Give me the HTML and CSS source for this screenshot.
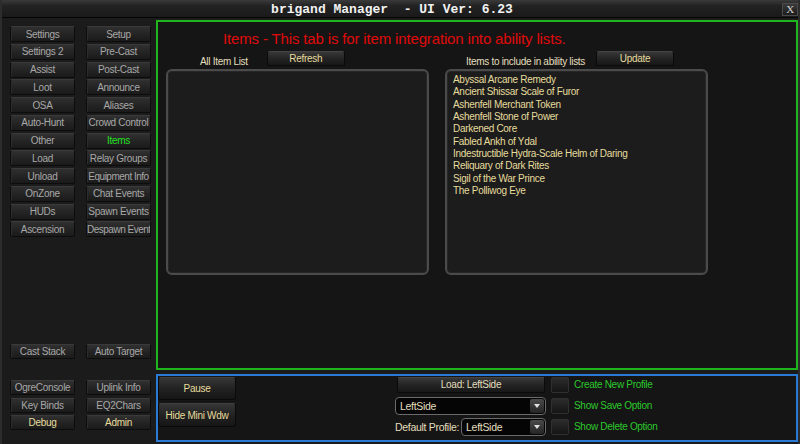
FILE: index.html
```html
<!DOCTYPE html>
<html lang="en">
<head>
    <meta charset="UTF-8">
    <title>brigand Manager</title>
    <link rel="stylesheet" href="styles.css">
</head>
<body>
    <div class="window">
        <div class="titlebar">
            <span class="title">brigand Manager&nbsp;&nbsp;- UI Ver: 6.23</span>
            <button class="close-btn">X</button>
        </div>

        <div class="frame">
            <aside class="sidebar">
                <div class="nav-grid">
                    <button class="nav-btn">Settings</button>
                    <button class="nav-btn">Setup</button>
                    <button class="nav-btn">Settings 2</button>
                    <button class="nav-btn">Pre-Cast</button>
                    <button class="nav-btn">Assist</button>
                    <button class="nav-btn">Post-Cast</button>
                    <button class="nav-btn">Loot</button>
                    <button class="nav-btn">Announce</button>
                    <button class="nav-btn">OSA</button>
                    <button class="nav-btn">Aliases</button>
                    <button class="nav-btn">Auto-Hunt</button>
                    <button class="nav-btn">Crowd Control</button>
                    <button class="nav-btn">Other</button>
                    <button class="nav-btn active">Items</button>
                    <button class="nav-btn">Load</button>
                    <button class="nav-btn">Relay Groups</button>
                    <button class="nav-btn">Unload</button>
                    <button class="nav-btn tight">Equipment Info</button>
                    <button class="nav-btn">OnZone</button>
                    <button class="nav-btn">Chat Events</button>
                    <button class="nav-btn">HUDs</button>
                    <button class="nav-btn">Spawn Events</button>
                    <button class="nav-btn">Ascension</button>
                    <button class="nav-btn tight">Despawn Event</button>
                </div>

                <div class="nav-grid nav-grid--mid">
                    <button class="nav-btn small">Cast Stack</button>
                    <button class="nav-btn small">Auto Target</button>
                </div>

                <div class="nav-grid nav-grid--bottom">
                    <button class="nav-btn small">OgreConsole</button>
                    <button class="nav-btn small">Uplink Info</button>
                    <button class="nav-btn small">Key Binds</button>
                    <button class="nav-btn small">EQ2Chars</button>
                    <button class="nav-btn small gold">Debug</button>
                    <button class="nav-btn small gold">Admin</button>
                </div>
            </aside>

            <main class="content">
                <section class="tab-panel">
                    <h1 class="tab-heading">Items - This tab is for item integration into ability lists.</h1>

                    <div class="lists">
                        <div class="list-col list-col--all">
                            <div class="list-header">
                                <span class="list-label">All Item List</span>
                                <button class="tab-btn">Refresh</button>
                            </div>
                            <div class="list-box"></div>
                        </div>

                        <div class="list-col list-col--include">
                            <div class="list-header">
                                <span class="list-label">Items to include in ability lists</span>
                                <button class="tab-btn">Update</button>
                            </div>
                            <ul class="list-box">
                                <li>Abyssal Arcane Remedy</li>
                                <li>Ancient Shissar Scale of Furor</li>
                                <li>Ashenfell Merchant Token</li>
                                <li>Ashenfell Stone of Power</li>
                                <li>Darkened Core</li>
                                <li>Fabled Ankh of Ydal</li>
                                <li>Indestructible Hydra-Scale Helm of Daring</li>
                                <li>Reliquary of Dark Rites</li>
                                <li>Sigil of the War Prince</li>
                                <li>The Polliwog Eye</li>
                            </ul>
                        </div>
                    </div>
                </section>

                <section class="profile-panel">
                    <div class="mini-actions">
                        <button class="big-btn">Pause</button>
                        <button class="big-btn">Hide Mini Wdw</button>
                    </div>

                    <div class="profile-grid">
                        <button class="load-btn">Load: LeftSide</button>
                        <span class="check"></span>
                        <span class="check-label">Create New Profile</span>

                        <div class="select">
                            <span class="select-value">LeftSide</span>
                            <span class="select-arrow"></span>
                        </div>
                        <span class="check"></span>
                        <span class="check-label">Show Save Option</span>

                        <div class="default-row">
                            <span class="default-label">Default Profile:</span>
                            <div class="select select--small">
                                <span class="select-value">LeftSide</span>
                                <span class="select-arrow"></span>
                            </div>
                        </div>
                        <span class="check"></span>
                        <span class="check-label">Show Delete Option</span>
                    </div>
                </section>
            </main>
        </div>
    </div>
</body>
</html>
```

FILE: styles.css
```css
/* palette */
:root {
    --frame-bg: #1b1b1b;
    --panel-bg: #151515;
    --btn-text: #a8a8a8;
    --gold-text: #e6dc9c;
    --pale-text: #e3dfbd;
    --green: #1fb51f;
    --green-text: #2cc92c;
    --blue: #2a7ad6;
}

* {
    box-sizing: border-box;
}

body {
    margin: 0;
    background: #0c0c0c;
    font-family: 'Liberation Sans', Arial, sans-serif;
    font-size: 10px;
    letter-spacing: -0.3px;
}

button {
    font-family: inherit;
    font-size: 10px;
    letter-spacing: -0.3px;
    padding: 0;
    cursor: pointer;
}

.window {
    width: 800px;
    height: 444px;
    display: flex;
    flex-direction: column;
    background: var(--frame-bg);
    border-left: 2px solid #2c2c2c;
    border-right: 2px solid #2c2c2c;
}

/* title bar */
.titlebar {
    height: 18px;
    display: flex;
    align-items: center;
    background: linear-gradient(#3a3a3a, #222 35%, #1a1a1a);
    border-bottom: 1px solid #050505;
}

.title {
    flex: 1;
    text-align: center;
    padding-top: 2px;
    font-family: 'Liberation Mono', 'Courier New', monospace;
    font-weight: bold;
    font-size: 13px;
    letter-spacing: 0;
    color: #f2f2f2;
    white-space: pre;
}

.close-btn {
    width: 16px;
    height: 13px;
    margin-top: 2px;
    background: linear-gradient(#3a3a3a, #1c1c1c);
    border: 1px solid #4a4a4a;
    color: #d0d0d0;
    font-family: 'Liberation Serif', serif;
    font-size: 11px;
    line-height: 11px;
}

.frame {
    flex: 1;
    display: flex;
    min-height: 0;
}

/* left nav */
.sidebar {
    width: 154px;
    padding: 8px 0 0 8px;
    display: flex;
    flex-direction: column;
}

.nav-grid {
    display: grid;
    grid-template-columns: 65px 65px;
    column-gap: 11px;
    row-gap: 1.75px;
}

.nav-grid--mid {
    margin-top: 107px;
}

.nav-grid--bottom {
    margin-top: 21px;
    row-gap: 2.5px;
}

.nav-btn {
    height: 16px;
    background: linear-gradient(#303030, #242424 50%, #1a1a1a);
    border: 1px solid #0c0c0c;
    border-top-color: #3a3a3a;
    border-radius: 2px;
    box-shadow: inset 1px 0 0 #2c2c2c;
    color: var(--btn-text);
    white-space: nowrap;
    overflow: hidden;
}

.nav-btn.tight {
    letter-spacing: -0.5px;
}

.nav-btn.small {
    height: 15px;
}

.nav-btn.active {
    color: #22e022;
}

.nav-btn.gold {
    color: var(--gold-text);
}

/* main area */
.content {
    flex: 1;
    padding: 2px 0 2px 0;
    display: flex;
    flex-direction: column;
    gap: 4px;
}

.tab-panel {
    height: 350px;
    border: 2px solid var(--green);
    background: var(--panel-bg);
    padding: 8px 0 0 8px;
}

.tab-heading {
    margin: 0 0 3px 57px;
    font-weight: normal;
    font-size: 15px;
    line-height: 18px;
    letter-spacing: -0.15px;
    color: #e00a0a;
}

.lists {
    display: grid;
    grid-template-columns: 263px 263px;
    column-gap: 16px;
}

.list-header {
    height: 15px;
    margin-bottom: 3px;
    display: flex;
    align-items: center;
}

.list-col--all .list-header {
    padding-left: 34px;
    gap: 19px;
}

.list-col--include .list-header {
    padding-left: 21px;
    gap: 11px;
}

.list-label {
    color: var(--pale-text);
    padding-top: 5px;
}

.tab-btn {
    width: 78px;
    height: 15px;
    background: linear-gradient(#383838, #242424 50%, #181818);
    border: 1px solid #0a0a0a;
    border-top-color: #444;
    border-radius: 3px 3px 1px 1px;
    color: var(--gold-text);
}

.list-box {
    height: 206px;
    margin: 0;
    padding: 3px 6px;
    list-style: none;
    background: #1c1c1c;
    border: 2px solid #4b4b4b;
    border-radius: 6px;
    box-shadow: inset 0 0 0 1px #262626;
}

.list-box li {
    line-height: 12.35px;
    color: var(--gold-text);
    white-space: nowrap;
}

/* bottom profile panel */
.profile-panel {
    height: 68px;
    border: 2px solid var(--blue);
    background: var(--panel-bg);
    display: flex;
    align-items: flex-start;
}

.mini-actions {
    width: 78px;
    padding-top: 1px;
    display: flex;
    flex-direction: column;
    gap: 3px;
}

.big-btn {
    height: 23px;
    background: linear-gradient(#363636, #222 50%, #161616);
    border: 1px solid #0a0a0a;
    border-top-color: #404040;
    border-radius: 3px;
    color: var(--gold-text);
}

.big-btn + .big-btn {
    height: 24px;
}

.profile-grid {
    margin-left: 159px;
    display: grid;
    grid-template-columns: 151px 18px auto;
    grid-template-rows: 17px 17px 17px;
    column-gap: 5px;
    row-gap: 4px;
    align-items: center;
}

.load-btn {
    height: 16px;
    margin: 0 1px 0 2px;
    background: linear-gradient(#383838, #242424 50%, #181818);
    border: 1px solid #0a0a0a;
    border-top-color: #444;
    border-radius: 2px;
    color: var(--pale-text);
}

.check {
    width: 18px;
    height: 16px;
    background: linear-gradient(#2c2c2c, #151515);
    border: 1px solid #303030;
    border-radius: 2px;
}

.check-label {
    color: var(--green-text);
    font-size: 10px;
}

.select {
    height: 18px;
    display: flex;
    align-items: center;
    background: #050505;
    border: 1px solid #6a6a6a;
    border-radius: 4px;
    padding: 0 1px 0 4px;
}

.select-value {
    flex: 1;
    color: var(--pale-text);
    font-size: 10.5px;
}

.select-arrow {
    width: 14px;
    height: 14px;
    background: linear-gradient(#4a4a4a, #252525);
    border-radius: 2px;
    position: relative;
}

.select-arrow::after {
    content: "";
    position: absolute;
    left: 4px;
    top: 5px;
    border-left: 3px solid transparent;
    border-right: 3px solid transparent;
    border-top: 4px solid #e0e0e0;
}

.default-row {
    display: flex;
    align-items: center;
    gap: 2px;
}

.default-label {
    color: var(--pale-text);
    font-size: 10.5px;
}

.select--small {
    flex: 1;
}
```
